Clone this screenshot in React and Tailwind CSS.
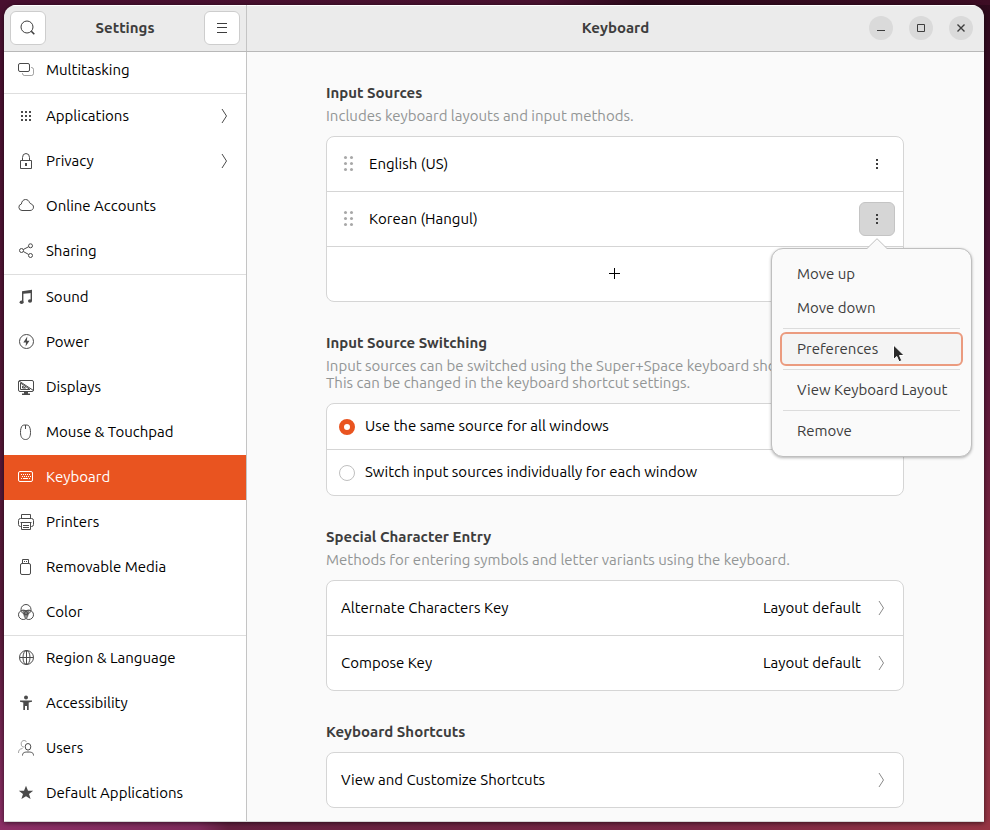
const svgProps = {
  width: 16,
  height: 16,
  viewBox: "0 0 16 16",
  fill: "none",
  stroke: "currentColor",
  strokeWidth: 1,
  "aria-hidden": true,
  className: "shrink-0",
};

const icons = {
  multitasking: (
    <>
      <rect x="0.5" y="1.5" width="11" height="8" rx="1.5" />
      <path d="M13 5.5h.5a2 2 0 0 1 2 2v4a2 2 0 0 1-2 2h-7a2 2 0 0 1-2-2V11" opacity=".5" />
    </>
  ),
  applications: (
    <path
      d="M3 3h2v2H3zM7 3h2v2H7zM11 3h2v2h-2zM3 7h2v2H3zM7 7h2v2H7zM11 7h2v2h-2zM3 11h2v2H3zM7 11h2v2H7zM11 11h2v2h-2z"
      fill="currentColor"
      stroke="none"
    />
  ),
  privacy: (
    <>
      <path d="M2.5 7.5h11v8h-11zM4.500 7.5V4.500a3.500 4 0 0 1 7 0v3" />
      <path d="M7 10h2v3H7z" fill="currentColor" stroke="none" />
    </>
  ),
  cloud: (
    <path d="M4 12.500a3.300 3.300 0 0 1-.6-6.500C3.600 3.500 5.300 1.500 7.500 1.500c2 0 3.500 1.200 4 3.200.6.100 1 .5 1.300 1.200 1.600.3 2.700 1.600 2.700 3.200 0 2-1.500 3.400-3.500 3.400z" />
  ),
  sharing: (
    <>
      <circle cx="3.500" cy="7.500" r="2" />
      <circle cx="12.500" cy="2.800" r="2" />
      <circle cx="12.500" cy="12.500" r="2" />
      <path d="M5.300 6.500l5.400-2.800M5.300 8.500l5.400 3" />
    </>
  ),
  sound: (
    <>
      <path d="M4 2.200L14 .8v3.200L5.400 4.800V13H4z" fill="currentColor" stroke="none" />
      <path d="M12.600 2H14v10h-1.400z" fill="currentColor" stroke="none" />
      <ellipse cx="3.600" cy="13.300" rx="2" ry="1.800" fill="currentColor" stroke="none" />
      <ellipse cx="12" cy="12" rx="2" ry="1.800" fill="currentColor" stroke="none" />
    </>
  ),
  power: (
    <>
      <circle cx="8.500" cy="7.500" r="7" />
      <path d="M9.300 2.500L5.300 8.500H8L7.600 12.500 11.500 6.800H8.900z" fill="currentColor" stroke="none" />
    </>
  ),
  displays: (
    <>
      <rect x="0.500" y="1.500" width="15" height="11" rx="1.500" />
      <path d="M2.500 4v6.500h9.500zM4.500 7.200v1.800h3zM1 2l14.500 9.500" />
      <path d="M6 13h4v1.500h2V16H4v-1.500h2z" fill="currentColor" stroke="none" />
    </>
  ),
  mouse: (
    <path d="M4.500 1.500C3 3 2.500 5.500 2.500 8.500 2.500 12.500 4 15.500 7.500 15.500s5-3 5-7c0-3-.5-5.500-2-7C9.500.8 5.500.8 4.500 1.500zM7.500 1v4" />
  ),
  keyboard: (
    <>
      <rect x="0.500" y="2.500" width="14" height="10" rx="1.500" />
      <path d="M3 5.500h9M4 7.500h9" strokeDasharray="1 1" />
      <path d="M3 9.500h1M5 9.500h5M11 9.500h1" />
    </>
  ),
  printers: (
    <>
      <path d="M3.500 4v-3.500h9v3.500M3 12.500H2.500a2 2 0 0 1-2-2v-4a2 2 0 0 1 2-2h11a2 2 0 0 1 2 2v4a2 2 0 0 1-2 2H13" />
      <path d="M3.500 9v6.500h9V9M2.500 8.500h11M5 11.500h6M5 13.500h6" />
    </>
  ),
  removable: (
    <>
      <rect x="2.500" y="4.500" width="10" height="11" rx="1.500" />
      <path d="M4.500 4V.5h6V4M6 2.500h1M8 2.500h1" />
    </>
  ),
  color: (
    <>
      <path d="M4 6h8L10.500 10 8 14 5.500 10z" fill="currentColor" opacity=".7" stroke="none" />
      <circle cx="8" cy="5.500" r="5" />
      <circle cx="5.200" cy="10.800" r="4.700" />
      <circle cx="10.800" cy="10.800" r="4.700" />
    </>
  ),
  region: (
    <>
      <circle cx="8.500" cy="7.500" r="7" />
      <ellipse cx="8.500" cy="7.500" rx="3.500" ry="7" />
      <path d="M1.500 7.500h14M8.500.5v14" />
    </>
  ),
  accessibility: (
    <>
      <circle cx="8" cy="2.500" r="2" fill="currentColor" stroke="none" />
      <path d="M2 5.500h12v1.300l-3.300.7V15H9v-4H7v4H5.300V7.500L2 6.800z" fill="currentColor" stroke="none" />
    </>
  ),
  users: (
    <>
      <path d="M6 7c-1.500.3-2.800-.8-2.800-3.200C3.200 1.800 4.300.5 6 .5c1.200 0 2 .5 2.500 1.500M.5 13c0-3 1-4 4-4.500" opacity=".5" />
      <ellipse cx="10" cy="6.800" rx="2.800" ry="3.300" />
      <path d="M4.500 15.500c0-2.500 1.300-3.500 5.500-3.500s5.500 1 5.500 3.500" />
    </>
  ),
  star: (
    <path d="M8 .8l2 4.900h5.200L11 9l1.600 5L8 11.200 3.400 14 5 9 .8 5.700H6z" fill="currentColor" stroke="none" />
  ),
};

function Icon({ name }) {
  return <svg {...svgProps}>{icons[name]}</svg>;
}

function Chevron() {
  return (
    <svg {...svgProps}>
      <path d="M6 1l4.500 7L6 15" />
    </svg>
  );
}

const groups = [
  [["Multitasking", "multitasking"]],
  [
    ["Applications", "applications", true],
    ["Privacy", "privacy", true],
    ["Online Accounts", "cloud"],
    ["Sharing", "sharing"],
  ],
  [
    ["Sound", "sound"],
    ["Power", "power"],
    ["Displays", "displays"],
    ["Mouse & Touchpad", "mouse"],
    ["Keyboard", "keyboard"],
    ["Printers", "printers"],
    ["Removable Media", "removable"],
    ["Color", "color"],
  ],
  [
    ["Region & Language", "region"],
    ["Accessibility", "accessibility"],
    ["Users", "users"],
    ["Default Applications", "star"],
  ],
];

function NavRow({ label, icon, more }) {
  const active = label === "Keyboard";
  return (
    <li>
      <a
        href="#"
        aria-current={active ? "page" : undefined}
        className={
          active
            ? "flex h-[45px] items-center gap-3 bg-[#e95420] px-3.5 text-white"
            : "flex h-[45px] items-center gap-3 px-3.5 text-black"
        }
      >
        <span className={active ? "mb-0.5 text-white" : "mb-0.5 text-[#4a4a4a]"}>
          <Icon name={icon} />
        </span>
        <span className="flex-1">{label}</span>
        {more && (
          <span className="mb-0.5 text-[#4a4a4a]">
            <Chevron />
          </span>
        )}
      </a>
    </li>
  );
}

function Sidebar() {
  return (
    <nav className="w-[243px] shrink-0 overflow-hidden border-r border-[#c4c4c4] bg-white">
      <div className="-mt-1 divide-y divide-[#dedede]">
        {groups.map((rows) => (
          <ul key={rows[0][0]}>
            {rows.map(([label, icon, more]) => (
              <NavRow key={label} label={label} icon={icon} more={more} />
            ))}
          </ul>
        ))}
      </div>
    </nav>
  );
}

function WindowButton({ label, children }) {
  return (
    <button
      aria-label={label}
      className="flex size-6 items-center justify-center rounded-full bg-[#dadada] text-[#3d3d3d]"
    >
      <svg {...svgProps}>{children}</svg>
    </button>
  );
}

function Header() {
  return (
    <header className="flex h-[47px] shrink-0 border-b border-[#b8b8b8] bg-[#ebebeb] font-bold text-[#3d3d3d] shadow-[inset_0_1px_0_#fff]">
      <div className="flex w-[243px] shrink-0 items-center justify-between border-r border-[#c4c4c4] px-1.5">
        <button
          aria-label="Search"
          className="flex h-[34px] w-9 items-center justify-center rounded-md border border-[#cdcdcd] bg-white"
        >
          <svg {...svgProps}>
            <circle cx="7" cy="7" r="6" />
            <path d="M11.300 11.300l3 3" strokeWidth="1.600" />
          </svg>
        </button>
        <h1>Settings</h1>
        <button
          aria-label="Main menu"
          className="flex h-[34px] w-9 items-center justify-center rounded-md border border-[#cdcdcd] bg-white"
        >
          <svg {...svgProps}>
            <path d="M3 3.500h10M3 7.500h10M3 12.500h10" />
          </svg>
        </button>
      </div>
      <div className="grid flex-1 grid-cols-[1fr_auto_1fr] items-center px-[11px]">
        <span />
        <h2>Keyboard</h2>
        <div className="flex justify-end gap-4">
          <WindowButton label="Minimize">
            <path d="M4 10.500h8" />
          </WindowButton>
          <WindowButton label="Maximize">
            <path d="M4.500 4.500h7v7h-7z" />
          </WindowButton>
          <WindowButton label="Close">
            <path d="M4.500 4.500l7 7M11.500 4.500l-7 7" strokeWidth="1.400" />
          </WindowButton>
        </div>
      </div>
    </header>
  );
}

function Section({ title, description, children }) {
  return (
    <section>
      <h3 className="leading-[18px] font-bold text-[#3d3d3d]">{title}</h3>
      {description && (
        <p className="mt-[5px] leading-[17px] whitespace-pre-line text-[#929595]">{description}</p>
      )}
      <div
        className={
          description
            ? "mt-3 divide-y divide-[#d5d5d5] rounded-lg border border-[#d5d5d5] bg-white text-black"
            : "mt-[11px] divide-y divide-[#d5d5d5] rounded-lg border border-[#d5d5d5] bg-white text-black"
        }
      >
        {children}
      </div>
    </section>
  );
}

function Grip() {
  return (
    <svg {...svgProps} fill="#a8a8a8" stroke="none">
      {[1.5, 7.5, 13.5].map((y) => (
        <g key={y}>
          <circle cx="4.500" cy={y} r="1.500" />
          <circle cx="10.500" cy={y} r="1.500" />
        </g>
      ))}
    </svg>
  );
}

function Dots() {
  return (
    <svg {...svgProps} fill="currentColor" stroke="none">
      <path d="M7 3h2v2H7zM7 7h2v2H7zM7 11h2v2H7z" />
    </svg>
  );
}

function MenuItem({ children }) {
  return (
    <button
      role="menuitem"
      className="flex h-[34px] w-full items-center rounded-md px-[17px] text-left whitespace-nowrap"
    >
      {children}
    </button>
  );
}

function MenuLine() {
  return <hr className="m-[3px] border-[#dcdcdc]" />;
}

function SourceMenu() {
  return (
    <div
      role="menu"
      className="absolute top-full -right-[77px] z-10 mt-3 w-[201px] rounded-xl border border-[#bfbfbf] bg-[#fafafa] p-2 text-[#3d3d3d] shadow-[0_1px_3px_rgba(0,0,0,0.3)]"
    >
      <svg
        width="22"
        height="12"
        viewBox="0 0 22 12"
        aria-hidden="true"
        className="absolute -top-[11px] left-[94px]"
      >
        <path d="M0 11.500L11 .5l11 11V12H0z" fill="#fafafa" />
        <path d="M0 10.500h1L11 .7l10 9.800h1" fill="none" stroke="#bfbfbf" />
      </svg>
      <MenuItem>Move up</MenuItem>
      <MenuItem>Move down</MenuItem>
      <MenuLine />
      <button
        role="menuitem"
        className="relative flex h-[34px] w-full items-center rounded-md border-2 border-[#eb9b7f] bg-[#f4f4f4] px-[15px] text-left"
      >
        Preferences
        <svg
          width="14"
          height="20"
          viewBox="0 0 14 20"
          aria-hidden="true"
          className="absolute top-2.5 left-[110px]"
        >
          <path
            d="M1.500 1v14.500l3.300-3L7 17.800l2.800-1.200-2.300-5.100h4.700z"
            fill="#2b2b2b"
            stroke="#fff"
            strokeWidth="1"
          />
        </svg>
      </button>
      <MenuLine />
      <MenuItem>View Keyboard Layout</MenuItem>
      <MenuLine />
      <MenuItem>Remove</MenuItem>
    </div>
  );
}

function SourceRow({ label, open }) {
  return (
    <div className="flex h-[55px] items-center gap-3 pr-2 pl-3.5">
      <Grip />
      <span className="flex-1">{label}</span>
      <div className="relative">
        <button
          aria-label={`Options for ${label}`}
          className={
            open
              ? "flex h-[34px] w-9 items-center justify-center rounded-md border border-[#c4c4c4] bg-[#d6d6d6] text-[#3d3d3d]"
              : "flex h-[34px] w-9 items-center justify-center rounded-md text-[#3d3d3d]"
          }
        >
          <Dots />
        </button>
        {open && <SourceMenu />}
      </div>
    </div>
  );
}

function RadioRow({ label, checked }) {
  return (
    <label className="flex h-[46px] items-center gap-2.5 px-3 last:h-[45px]">
      <input
        type="radio"
        name="switching"
        defaultChecked={checked}
        className="size-4 appearance-none rounded-full border border-[#bfbfbf] bg-white checked:border-[5px] checked:border-[#e95420]"
      />
      {label}
    </label>
  );
}

function LinkRow({ label, value }) {
  return (
    <button className="flex h-[55px] w-full items-center gap-3 px-3.5 text-left last:h-[54px]">
      <span className="flex-1">{label}</span>
      {value && <span>{value}</span>}
      <span className="text-[#8a8a8a]">
        <Chevron />
      </span>
    </button>
  );
}

export default function App() {
  return (
    <div className="flex h-screen min-h-[830px] flex-col pt-[5px] pr-1.5 pb-2 pl-1 font-['Ubuntu','Noto_Sans',sans-serif] text-[15px] [background:linear-gradient(90deg,#8c2f66_0%,#7e2c5c_20%,#63203f_23%,#7a2846_70%,#963544_100%)_bottom/100%_8px_no-repeat,linear-gradient(90deg,#480f2f_0%,#4a1230_55%,#2e0a1c_65%,#3d0d24_100%)_top/100%_5px_no-repeat,linear-gradient(180deg,#480f2f_0%,#5a1a3a_75%,#8c2f66_100%)_left/50%_100%_no-repeat,linear-gradient(180deg,#2e0a1c_0%,#4f1238_35%,#7a2540_70%,#963544_100%)_right/50%_100%_no-repeat]">
      <div className="flex flex-1 flex-col overflow-hidden rounded-t-xl shadow-[0_1px_5px_rgba(0,0,0,0.6)]">
        <Header />
        <div className="flex flex-1 border-b border-[#d5d5d5]">
          <Sidebar />
          <main className="flex flex-1 flex-col gap-8 bg-[#fafafa] pt-8 pr-20 pl-[79px]">
            <Section title="Input Sources" description="Includes keyboard layouts and input methods.">
              <SourceRow label="English (US)" />
              <SourceRow label="Korean (Hangul)" open />
              <button aria-label="Add input source" className="flex h-[54px] w-full items-center justify-center">
                <svg {...svgProps}>
                  <path d="M7.500 2v11M2 7.500h11" />
                </svg>
              </button>
            </Section>
            <Section
              title="Input Source Switching"
              description={
                "Input sources can be switched using the Super+Space keyboard shortcut.\nThis can be changed in the keyboard shortcut settings."
              }
            >
              <RadioRow label="Use the same source for all windows" checked />
              <RadioRow label="Switch input sources individually for each window" />
            </Section>
            <Section
              title="Special Character Entry"
              description="Methods for entering symbols and letter variants using the keyboard."
            >
              <LinkRow label="Alternate Characters Key" value="Layout default" />
              <LinkRow label="Compose Key" value="Layout default" />
            </Section>
            <Section title="Keyboard Shortcuts">
              <LinkRow label="View and Customize Shortcuts" />
            </Section>
          </main>
        </div>
      </div>
    </div>
  );
}
